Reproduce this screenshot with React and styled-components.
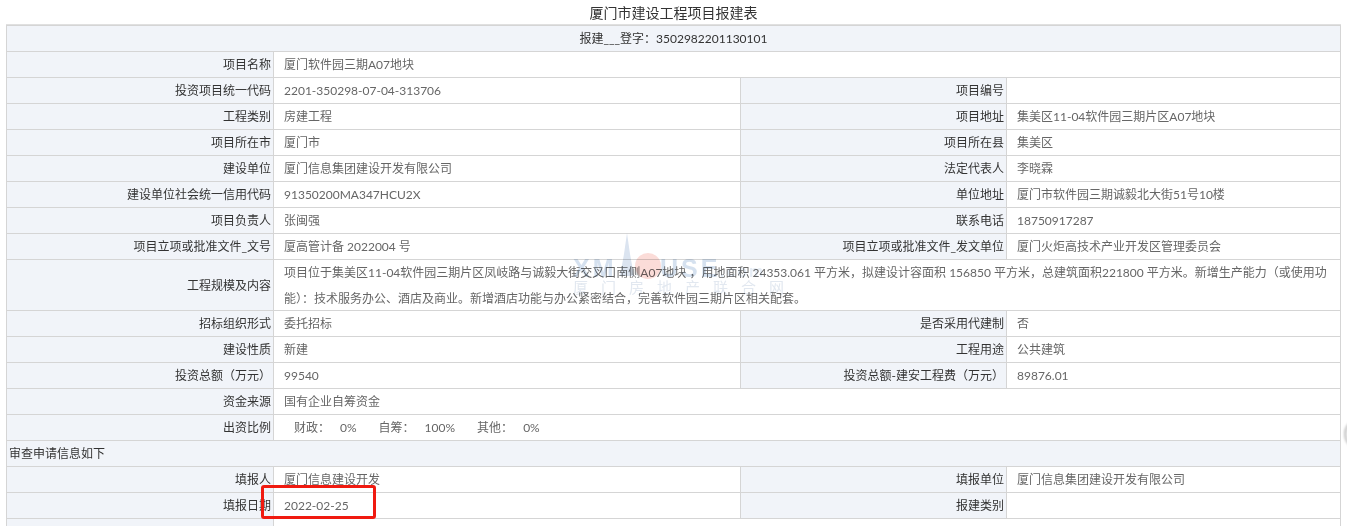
import styled, { createGlobalStyle } from 'styled-components'

const GlobalStyle = createGlobalStyle`
  html, body {
    margin: 0;
    height: 526px;
    overflow: hidden;
    background: #fff;
  }
  body {
    font-family: Lato, "Noto Sans CJK SC", sans-serif;
    font-size: 12px;
  }
`

const rows = [
  { label: '项目名称', value: '厦门软件园三期A07地块' },
  { label: '投资项目统一代码', value: '2201-350298-07-04-313706', label2: '项目编号', value2: '' },
  { label: '工程类别', value: '房建工程', label2: '项目地址', value2: '集美区11-04软件园三期片区A07地块' },
  { label: '项目所在市', value: '厦门市', label2: '项目所在县', value2: '集美区' },
  { label: '建设单位', value: '厦门信息集团建设开发有限公司', label2: '法定代表人', value2: '李晓霖' },
  { label: '建设单位社会统一信用代码', value: '91350200MA347HCU2X', label2: '单位地址', value2: '厦门市软件园三期诚毅北大街51号10楼' },
  { label: '项目负责人', value: '张闽强', label2: '联系电话', value2: '18750917287' },
  { label: '项目立项或批准文件_文号', value: '厦高管计备 2022004 号', label2: '项目立项或批准文件_发文单位', value2: '厦门火炬高技术产业开发区管理委员会' },
]

const rowsAfter = [
  { label: '招标组织形式', value: '委托招标', label2: '是否采用代建制', value2: '否' },
  { label: '建设性质', value: '新建', label2: '工程用途', value2: '公共建筑' },
  { label: '投资总额（万元）', value: '99540', label2: '投资总额-建安工程费（万元）', value2: '89876.01' },
  { label: '资金来源', value: '国有企业自筹资金' },
]

const scope = '项目位于集美区11-04软件园三期片区凤岐路与诚毅大街交叉口南侧A07地块 ，用地面积 24353.061 平方米，拟建设计容面积 156850 平方米，总建筑面积221800 平方米。新增生产能力（或使用功能）：技术服务办公、酒店及商业。新增酒店功能与办公紧密结合，完善软件园三期片区相关配套。'

const ratios = [
  { name: '财政：', percent: '0%' },
  { name: '自筹：', percent: '100%' },
  { name: '其他：', percent: '0%' },
]

const Page = styled.div`
  position: relative;
  height: 526px;
  overflow: hidden;
  padding: 0 6px;
  box-sizing: border-box;
`

const Title = styled.div`
  height: 24px;
  line-height: 25px;
  font-size: 14px;
  color: #333;
  text-align: center;
  border-bottom: 1px solid #e0e0e0;
`

const Sheet = styled.table`
  width: 1335px;
  table-layout: fixed;
  border-collapse: collapse;
`

const Cell = styled.td`
  height: 25px;
  padding: 0 1px 0 10px;
  border: 1px solid #d5d5d5;
  line-height: 25px;
  color: #666;
  text-align: left;
  word-break: break-all;
`

const Label = styled(Cell)`
  padding: 0 2px 0 0;
  background: #f1f4f9;
  color: #333;
  text-align: right;
`

const Heading = styled(Cell)`
  padding: 0 0 0 ${(p) => (p.$center ? '0' : '2px')};
  background: #f1f4f9;
  color: #333;
  text-align: ${(p) => (p.$center ? 'center' : 'left')};
`

const Scope = styled.div`
  height: 50px;
  line-height: 26px;
`

const Ratios = styled.div`
  display: flex;
  padding-left: 10px;
`

const Ratio = styled.span`
  display: flex;
  gap: 10px;
  margin-right: 22px;
`

const Watermark = styled.svg`
  position: absolute;
  left: 565px;
  top: 230px;
  pointer-events: none;
  mix-blend-mode: multiply;
`

const RedBox = styled.div`
  position: absolute;
  left: 261px;
  top: 485px;
  width: 109px;
  height: 28px;
  border: 3px solid #f01a10;
  border-radius: 3px;
`

const SideButton = styled.div`
  position: absolute;
  left: 1344px;
  top: 420px;
  width: 20px;
  height: 24px;
  border-radius: 50%;
  background: #f0f0f0;
  border: 2px solid #c4c4c4;
  filter: blur(1px);
`

function InfoRow({ row }) {
  return (
    <tr>
      <Label>{row.label}</Label>
      {row.label2 ? (
        <>
          <Cell>{row.value}</Cell>
          <Label>{row.label2}</Label>
          <Cell>{row.value2}</Cell>
        </>
      ) : (
        <Cell colSpan={3}>{row.value}</Cell>
      )}
    </tr>
  )
}

function App() {
  return (
    <Page>
      <GlobalStyle />
      <Title>厦门市建设工程项目报建表</Title>
      <Sheet>
        <colgroup>
          <col style={{ width: 267 }} />
          <col style={{ width: 467 }} />
          <col style={{ width: 266 }} />
          <col />
        </colgroup>
        <tbody>
          <tr>
            <Heading colSpan={4} $center>报建___登字：3502982201130101</Heading>
          </tr>
          {rows.map((row) => <InfoRow key={row.label} row={row} />)}
          <tr>
            <Label>工程规模及内容</Label>
            <Cell colSpan={3}><Scope>{scope}</Scope></Cell>
          </tr>
          {rowsAfter.map((row) => <InfoRow key={row.label} row={row} />)}
          <tr>
            <Label>出资比例</Label>
            <Cell colSpan={3}>
              <Ratios>
                {ratios.map((r) => (
                  <Ratio key={r.name}>
                    <span>{r.name}</span>
                    <span>{r.percent}</span>
                  </Ratio>
                ))}
              </Ratios>
            </Cell>
          </tr>
          <tr>
            <Heading colSpan={4}>审查申请信息如下</Heading>
          </tr>
          <tr>
            <Label>填报人</Label>
            <Cell>厦门信息建设开发</Cell>
            <Label>填报单位</Label>
            <Cell>厦门信息集团建设开发有限公司</Cell>
          </tr>
          <tr>
            <Label>填报日期</Label>
            <Cell>2022-02-25</Cell>
            <Label>报建类别</Label>
            <Cell></Cell>
          </tr>
          <tr>
            <Label></Label>
            <Cell colSpan={3}></Cell>
          </tr>
        </tbody>
      </Sheet>
      <Watermark width="240" height="66" viewBox="0 0 240 66">
        <path d="M62 3 L65 24 L69 46 L55 46 L59 24 Z" fill="#dbe4f0" />
        <circle cx="83" cy="36" r="13" fill="#fbdcd8" />
        <text x="8" y="47" fontFamily="Liberation Sans" fontWeight="700" fontSize="25" letterSpacing="3" fill="#d5e1ef">XM</text>
        <text x="95" y="47" fontFamily="Liberation Sans" fontWeight="700" fontSize="25" letterSpacing="3" fill="#d5e1ef">USE</text>
        <text x="155" y="47" fontFamily="Liberation Sans" fontWeight="700" fontSize="16" letterSpacing="2" fill="#e6edf5">.com</text>
        <text x="8" y="63" fontFamily="Noto Sans CJK SC" fontSize="15" letterSpacing="13" fill="#e2e8f0">厦门房地产联合网</text>
      </Watermark>
      <RedBox />
      <SideButton />
    </Page>
  )
}

export default App
